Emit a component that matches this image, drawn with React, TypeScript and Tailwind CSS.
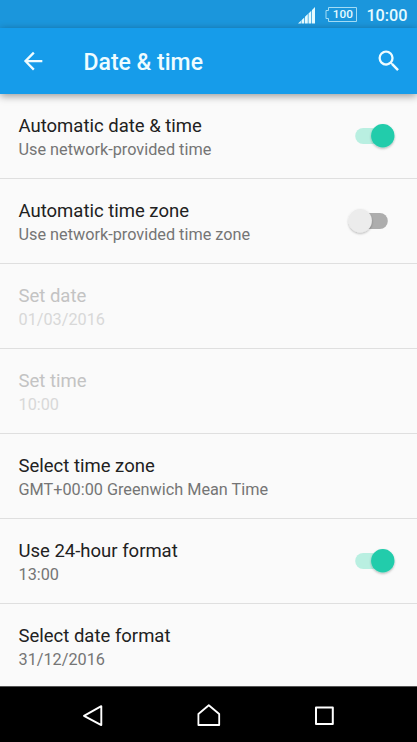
import { ReactNode } from "react";

type RowProps = {
  title: string;
  summary: string;
  disabled?: boolean;
  toggle?: boolean;
};

function Switch({ on }: { on: boolean }) {
  return (
    <svg className="mr-[17px] mb-px shrink-0" width="56" height="40" viewBox="0 0 56 40" role="switch" aria-checked={on}>
      <defs>
        <filter id="thumb-shadow" x="-30%" y="-30%" width="160%" height="170%">
          <feDropShadow dx="0" dy="1.2" stdDeviation="1" floodColor="#000" floodOpacity="0.28" />
        </filter>
      </defs>
      <rect x="11.2" y="12" width="32.6" height="16" rx="8" fill={on ? "#b9efe1" : "#adadad"} />
      <circle cx={on ? 38.8 : 16.2} cy="19.8" r="11.7" fill={on ? "#21ccab" : "#ececec"} filter="url(#thumb-shadow)" />
    </svg>
  );
}

function Row({ title, summary, disabled, toggle }: RowProps) {
  return (
    <li className="flex h-[85px] items-center justify-between border-b border-[#dfdfdf] pl-[18.5px]">
      <div className="pt-1 whitespace-nowrap">
        <div className={`text-[18.5px] leading-6 ${disabled ? "text-[#c3c3c3]" : "text-[#212121]"}`}>{title}</div>
        <div className={`text-[16.25px] leading-6 ${disabled ? "text-[#d8d8d8]" : "text-[#757575]"}`}>{summary}</div>
      </div>
      {toggle !== undefined && <Switch on={toggle} />}
    </li>
  );
}

function IconButton({ label, className, children }: { label: string; className?: string; children: ReactNode }) {
  return (
    <button aria-label={label} className={className}>
      {children}
    </button>
  );
}

const rows: RowProps[] = [
  { title: "Automatic date & time", summary: "Use network-provided time", toggle: true },
  { title: "Automatic time zone", summary: "Use network-provided time zone", toggle: false },
  { title: "Set date", summary: "01/03/2016", disabled: true },
  { title: "Set time", summary: "10:00", disabled: true },
  { title: "Select time zone", summary: "GMT+00:00 Greenwich Mean Time" },
  { title: "Use 24-hour format", summary: "13:00", toggle: true },
  { title: "Select date format", summary: "31/12/2016" },
];

export default function App() {
  return (
    <div className="flex h-[742px] w-[417px] flex-col overflow-hidden bg-[#fafafa] font-['Roboto',sans-serif]">
      <div className="flex h-7 shrink-0 items-center justify-end bg-[#1b96dc] pr-[9.5px] text-[#e6fbff]">
        <svg className="mr-[9px] mt-0.5" width="18" height="18" viewBox="0 0 18 18" fill="currentColor">
          <path d="M0 17.5 2.9 14.8v2.7zM3.5 14.2 6.3 11.5v6H3.5zM7 10.8 9.8 8.1v9.4H7zM10.5 7.4 13.3 4.7v12.8h-2.8zM14 4 17 1v16.5h-3z" />
        </svg>
        <div className="relative mr-[9px] flex h-[17px] w-8 items-center justify-center pt-[2px] pl-[3px] text-[11.8px] leading-none font-medium">
          <svg className="absolute inset-0" width="32" height="17" viewBox="0 0 32 17" fill="none" stroke="#a4dcf5">
            <path d="M3.5 1.5h28v14h-28v-3h-2.5v-8h2.5z" />
          </svg>
          100
        </div>
        <span className="mt-[3px] text-[16.2px] leading-5 font-medium">10:00</span>
      </div>
      <header className="z-10 flex h-[66px] shrink-0 items-center bg-[#169cea] pr-3.5 pl-[18.5px] text-[#effcff] shadow-[0_2px_8px_rgba(0,0,0,0.4)]">
        <IconButton label="Back">
          <svg width="28" height="28" viewBox="0 0 24 24" fill="currentColor">
            <path d="M20 11.1H7.83l5.59-5.59L12 4.1l-7.8 8 7.8 8 1.41-1.41-5.58-5.59H20v-2z" />
          </svg>
        </IconButton>
        <h1 className="mt-1 ml-[37px] flex-1 text-[23px] leading-7 font-medium">Date &amp; time</h1>
        <IconButton label="Search">
          <svg width="28" height="28" viewBox="0 0 24 24" fill="currentColor">
            <path d="M15.5 14h-.79l-.28-.27A6.471 6.471 0 0 0 16 9.5 6.5 6.5 0 1 0 9.5 16c1.61 0 3.09-.59 4.23-1.57l.27.28v.79l5 4.99L20.49 19l-4.99-5zm-6 0C7.01 14 5 11.99 5 9.5S7.01 5 9.5 5 14 7.01 14 9.5 11.99 14 9.5 14z" />
          </svg>
        </IconButton>
      </header>
      <main className="h-[592px] shrink-0 overflow-hidden">
        <ul>
          {rows.map((row) => (
            <Row key={row.title} {...row} />
          ))}
        </ul>
      </main>
      <nav className="flex h-14 shrink-0 items-center justify-between border-t border-[#555] bg-black pt-0.5 pr-[81px] pl-[81px] text-white">
        <IconButton label="Back">
          <svg width="24" height="24" viewBox="0 0 24 24" fill="none" stroke="currentColor" strokeWidth="1.9" strokeLinejoin="round">
            <path d="M20.3 2.2v18.9L3 11.8z" />
          </svg>
        </IconButton>
        <IconButton label="Home">
          <svg width="24" height="24" viewBox="0 0 24 24" fill="none" stroke="currentColor" strokeWidth="1.8" strokeLinejoin="round">
            <path d="M1.4 21V10L11.8 1.2 22.2 10v11z" />
          </svg>
        </IconButton>
        <IconButton label="Recent apps">
          <svg width="24" height="24" viewBox="0 0 24 24" fill="none" stroke="currentColor" strokeWidth="2" strokeLinejoin="round">
            <rect x="4" y="3.5" width="16.8" height="16.5" />
          </svg>
        </IconButton>
      </nav>
    </div>
  );
}
